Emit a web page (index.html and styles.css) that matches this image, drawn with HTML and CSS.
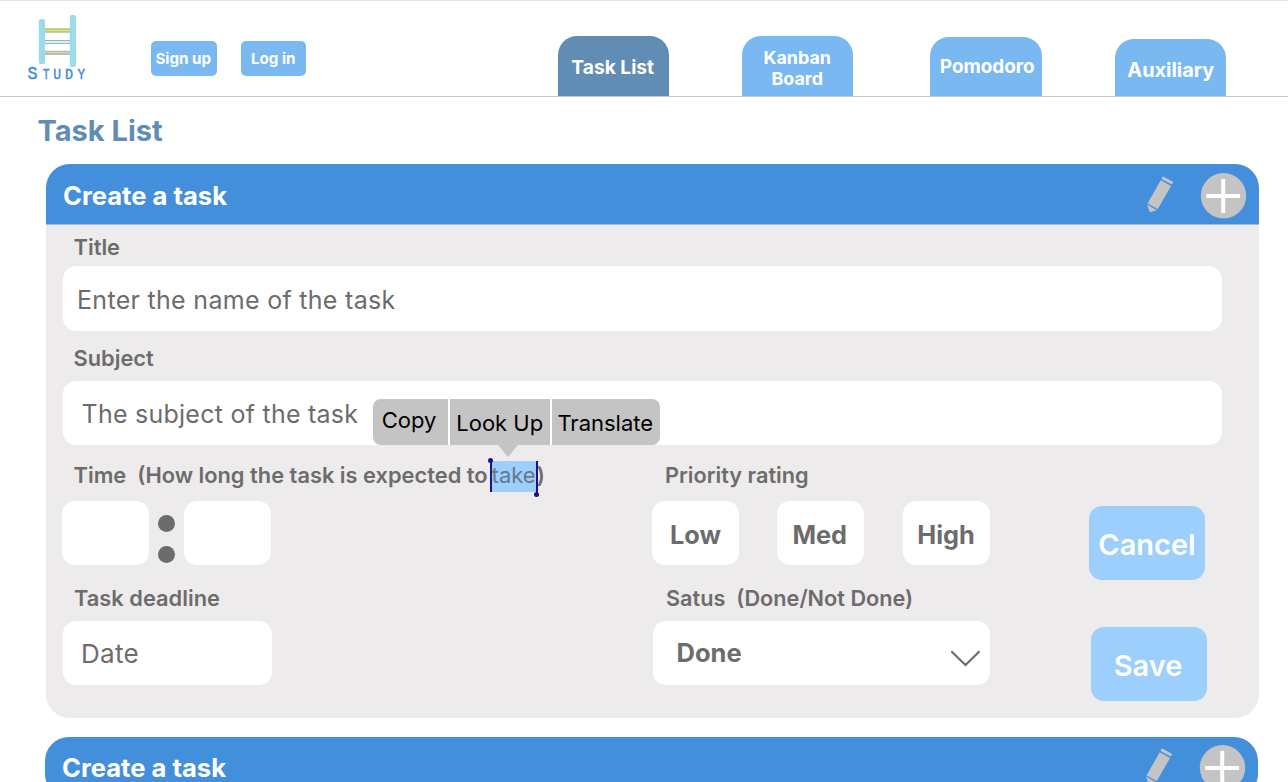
FILE: index.html
```html
<!DOCTYPE html>
<html lang="en">
<head>
<meta charset="utf-8">
<title>Study - Task List</title>
<link rel="stylesheet" href="styles.css">
</head>
<body>
<header class="topbar">
  <svg class="logo" width="64" height="68" viewBox="0 0 64 68">
    <g fill="none">
      <path d="M16 16.5h27" stroke="#7f9f8a" stroke-width="4"/>
      <path d="M16 16.5h27" stroke="#f0ee5b" stroke-width="2"/>
      <path d="M16 28h27" stroke="#8fb9c9" stroke-width="4"/>
      <path d="M16 28h27" stroke="#d9f2ee" stroke-width="2"/>
      <path d="M16 38.8h27" stroke="#8fb3b8" stroke-width="4"/>
      <path d="M16 38.6h27" stroke="#e2cf9c" stroke-width="2"/>
    </g>
    <rect x="10.8" y="5" width="6.2" height="45" rx="1.8" fill="#9bdbea"/>
    <rect x="41.8" y="1" width="6.2" height="52" rx="1.8" fill="#9bdbea"/>
    <g class="logo-text">
      <text x="-0.4" y="64.5" font-size="19" textLength="10" lengthAdjust="spacingAndGlyphs">S</text>
      <text x="15" y="64.5" font-size="15.5" textLength="6.4" lengthAdjust="spacingAndGlyphs">T</text>
      <text x="25.2" y="64.5" font-size="15.5" textLength="7.8" lengthAdjust="spacingAndGlyphs">U</text>
      <text x="37" y="64.5" font-size="15.5" textLength="8" lengthAdjust="spacingAndGlyphs">D</text>
      <text x="49.4" y="64.5" font-size="15.5" textLength="7.6" lengthAdjust="spacingAndGlyphs">Y</text>
    </g>
  </svg>
  <div class="account">
    <button class="account-btn">Sign up</button>
    <button class="account-btn">Log in</button>
  </div>
  <nav class="tabs">
    <a class="tab tab-active"><span>Task List</span></a>
    <a class="tab tab-kanban"><span>Kanban Board</span></a>
    <a class="tab tab-pomodoro"><span>Pomodoro</span></a>
    <a class="tab tab-auxiliary"><span>Auxiliary</span></a>
  </nav>
</header>
<main>
  <h1 class="page-title">Task List</h1>
  <section class="card">
    <div class="card-head">
      <h2>Create a task</h2>
      <svg class="head-icons" width="104" height="50" viewBox="0 0 104 50">
        <g fill="#c4c4c4"><path d="M19 3.3 29.3 9 27.8 11.6 17.5 5.9z"/><path d="M16.8 7.2 27.1 12.9 13.8 36.1 3.5 30.4z"/><path d="M2.9 31.5 13 37.2 6 39.2z"/></g>
        <circle cx="79.5" cy="22.8" r="22.7" fill="#c4c4c4"/>
        <path d="M62.3 23h33.8M79.2 6v34" stroke="#fff" stroke-width="4"/>
      </svg>
    </div>
    <div class="card-body">
      <div class="label label-title">Title</div>
      <div class="field field-wide field-title"><span>Enter the name of the task</span></div>
      <div class="label label-subject">Subject</div>
      <div class="field field-wide field-subject"><span>The subject of the task</span></div>
      <div class="details">
        <div class="schedule">
          <div class="label label-time">Time&nbsp; (How long the task is expected to<span class="selected">take<span class="handle handle-start"></span><span class="handle handle-end"></span></span><span class="paren">)</span></div>
          <div class="time-row">
            <div class="field box"></div>
            <div class="colon"><i></i><i></i></div>
            <div class="field box"></div>
          </div>
          <div class="label label-deadline">Task deadline</div>
          <div class="field field-date"><span>Date</span></div>
        </div>
        <div class="state">
          <div class="label label-priority">Priority rating</div>
          <div class="priority-row">
            <button class="field box low">Low</button>
            <button class="field box med">Med</button>
            <button class="field box high">High</button>
          </div>
          <div class="label label-status">Satus&nbsp; (Done/Not Done)</div>
          <div class="field select"><span>Done</span>
            <svg width="32" height="18" viewBox="0 0 32 18"><path d="M1.3 1.3 15.5 15 29.5 1.3" fill="none" stroke="#6d6c6c" stroke-width="2.2"/></svg>
          </div>
        </div>
        <div class="actions">
          <button class="action cancel">Cancel</button>
          <button class="action save">Save</button>
        </div>
      </div>
      <div class="popup">
        <span class="copy">Copy</span><span class="lookup">Look Up</span><span class="translate">Translate</span>
      </div>
    </div>
  </section>
  <section class="card card-next">
    <div class="card-head">
      <h2>Create a task</h2>
      <svg class="head-icons" width="104" height="50" viewBox="0 0 104 50">
        <g fill="#c4c4c4"><path d="M19 3.3 29.3 9 27.8 11.6 17.5 5.9z"/><path d="M16.8 7.2 27.1 12.9 13.8 36.1 3.5 30.4z"/><path d="M2.9 31.5 13 37.2 6 39.2z"/></g>
        <circle cx="79.5" cy="22.8" r="22.7" fill="#c4c4c4"/>
        <path d="M62.3 23h33.8M79.2 6v34" stroke="#fff" stroke-width="4"/>
      </svg>
    </div>
  </section>
</main>
</body>
</html>
```
FILE: styles.css
```css
* { box-sizing: border-box; }
body { margin: 0; height: 782px; overflow: hidden; background: #fff; font-family: Inter, sans-serif; color: #6d6c6c; }
button { border: 0; padding: 0; font: inherit; color: inherit; white-space: nowrap; }

.topbar { display: flex; height: 97px; border-top: 1.5px solid #e5e5e5; border-bottom: 1px solid #c4c4c4; }
.logo { flex: none; margin: 13px 0 0 28px; overflow: visible; }
.logo-text { font-family: "Liberation Mono", monospace; fill: #418ddc; stroke: #418ddc; stroke-width: .5px; }
.account { display: flex; gap: 24px; margin: 39.5px 0 0 59px; }
.account-btn { width: 65.5px; height: 35.5px; border-radius: 5px; background: #7ab8f2; color: #fff; font-size: 15.2px; font-weight: 700; padding-top: 1px; }
.account-btn:first-child { padding-right: 1px; }
.tabs { display: flex; align-items: flex-end; margin-left: 251.5px; }
.tab { display: flex; flex: none; justify-content: center; align-items: center; width: 111.5px; border-radius: 19px 19px 0 0; background: #7ab8f2; color: #fff; font-weight: 700; text-align: center; line-height: 21px; }
.tab-active { height: 60px; background: #618db5; font-size: 19.2px; padding: 2px 1px 0 0; }
.tab-kanban { height: 60px; margin-left: 72.5px; font-size: 17.9px; padding: 4px 19px 0 19px; }
.tab-pomodoro { height: 59px; margin-left: 77px; font-size: 18.9px; padding: 0 0 0 3px; }
.tab-auxiliary { height: 57px; margin-left: 73px; font-size: 19.9px; padding: 5px 0 0 1px; }

.page-title { margin: 14px 0 13px 37.5px; font-size: 29px; font-weight: 700; line-height: 40px; color: #618db5; }
.card { width: 1213px; margin-left: 46px; border-radius: 24px; background: #edebec; overflow: hidden; }
.card-next { margin: 19px 0 0 45px; }
.card-head { display: flex; justify-content: space-between; height: 61px; padding: 9px 11px 0 17px; background: #448fdc; border-bottom: 1px solid #a4b9d2; }
.card-head h2 { margin: 0; font-size: 25.6px; font-weight: 700; line-height: 46px; color: #fff; }
.card-next h2 { margin-top: -1px; }
.card-next .head-icons { margin-top: -1px; }
.card-body { position: relative; height: 493px; padding: 8px 37px 0 17px; }

.label { height: 28px; padding-left: 10.5px; font-size: 21.85px; font-weight: 600; line-height: 28px; white-space: nowrap; }
.label-title { margin-bottom: 5px; }
.label-subject { margin: 13px 0 9px; }
.label-time, .label-priority { margin: 16px 0 12px; }
.label-deadline, .label-status { margin: 19px 0 9px; }
.label-deadline { padding-left: 11px; }
.label-priority, .label-status { padding-left: 13px; font-size: 21.7px; }
.label-status { padding-left: 14px; }
.field { display: flex; align-items: center; height: 64px; border-radius: 13px; background: #fff; font-size: 26px; }
.field-wide { width: 1158.5px; font-size: 25px; letter-spacing: .3px; }
.field-title { padding: 3px 0 0 14px; height: 65px; }
.field-subject { padding: 2px 0 0 18.5px; letter-spacing: .25px; }
.details { display: grid; grid-template-columns: 589px 338px 118px; }
.time-row { display: flex; margin-left: -1px; }
.box { justify-content: center; width: 87px; }
.colon { display: flex; flex-direction: column; gap: 14px; width: 35px; padding: 14px 0 0 8.5px; }
.colon i { width: 17px; height: 17px; border-radius: 50%; background: #6d6c6c; }
.field-date { width: 209px; padding: 0 0 0 18px; letter-spacing: .3px; }
.priority-row { display: flex; justify-content: space-between; width: 337.5px; }
.priority-row .box { font-weight: 700; font-size: 25.3px; padding-top: 3px; }
.priority-row .med { padding-top: 3px; padding-right: 2px; }
.select { width: 337px; margin-left: 1px; justify-content: space-between; padding: 0 8px 2px 23.5px; font-size: 25.5px; font-weight: 700; }
.select svg { margin-top: 14px; }
.actions { display: flex; flex-direction: column; gap: 47px; margin-left: 99px; padding-top: 61px; }
.action { width: 116px; height: 74px; border-radius: 13px; background: #9ccffb; color: #fff; font-size: 29px; font-weight: 600; padding-top: 3px; }
.save { margin-left: 2px; padding-right: 2px; }

.selected { position: relative; display: inline-block; height: 31px; margin-left: 3px; padding: 0 1px; background: #9ccffb; color: #66788a; vertical-align: top; font-weight: 400; font-size: 22px; }
.handle { position: absolute; width: 2px; height: 33px; background: #1d1280; }
.handle-start { left: -1px; top: -2px; }
.handle-end { right: -1px; top: 0; }
.handle::after { content: ""; position: absolute; left: -1.5px; width: 5px; height: 5px; border-radius: 50%; background: #1d1280; }
.handle-start::after { top: -1px; }
.handle-end::after { bottom: -3px; }
.popup { position: absolute; left: 327px; top: 174px; display: grid; grid-template-columns: 75px 99.5px 108.5px; column-gap: 2px; height: 46px; color: #000; font-size: 22px; line-height: 48px; text-align: center; }
.popup span { height: 46px; background: #c4c4c4; }
.popup .copy { border-radius: 8px 0 0 8px; line-height: 43px; padding-right: 3px; }
.popup .translate { border-radius: 0 8px 8px 0; padding-right: 1px; }
.popup::after { content: ""; position: absolute; left: 125px; top: 46px; border: 10px solid transparent; border-top: 12px solid #c4c4c4; border-bottom: 0; }
```
